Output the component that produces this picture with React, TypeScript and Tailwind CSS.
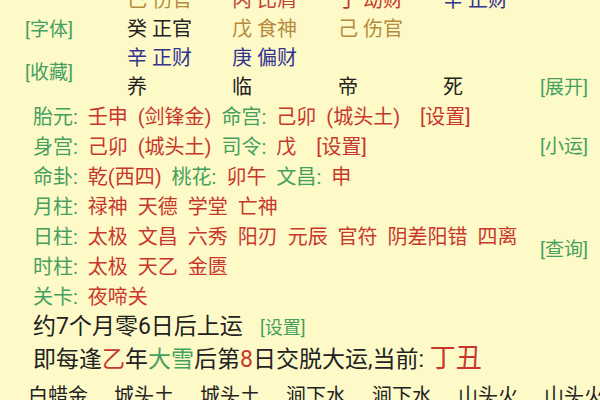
import React from 'react';

// 八字排盘 detail view (scrolled a little, so the top row is cut off)

type Cell = { gan: string; shen: string; color: string };

const GREEN = 'text-[#45a060]';
const RED = 'text-[#c8372d]';

const pillarRows: (Cell | null)[][] = [
  [
    { gan: '己', shen: '伤官', color: 'text-[#b58a3e]' },
    { gan: '丙', shen: '比肩', color: 'text-[#c0463a]' },
    { gan: '丁', shen: '劫财', color: 'text-[#c8372d]' },
    { gan: '辛', shen: '正财', color: 'text-[#34348f]' },
  ],
  [
    { gan: '癸', shen: '正官', color: 'text-[#222222]' },
    { gan: '戊', shen: '食神', color: 'text-[#b58a3e]' },
    { gan: '己', shen: '伤官', color: 'text-[#b58a3e]' },
    null,
  ],
  [
    { gan: '辛', shen: '正财', color: 'text-[#34348f]' },
    { gan: '庚', shen: '偏财', color: 'text-[#34348f]' },
    null,
    null,
  ],
];

const stages = ['养', '临', '帝', '死'];
const nayin = ['白蜡金', '城头土', '城头土', '涧下水', '涧下水', '山头火', '山头火'];

const Label: React.FC<{ children: React.ReactNode }> = ({ children }) => (
  <span className={GREEN}>{children}: </span>
);

export default function App() {
  return (
    <div className="w-[600px] h-[400px] overflow-hidden bg-[#fdfac8] font-['Roboto','Noto_Sans_CJK_SC',sans-serif] text-[#222222]">
      <div className="-mt-[14px]">
        <div className="flex">
          <div className="flex-1 min-w-0">
            {/* pillars */}
            <div className="flex">
              <div className={`w-[127px] pl-[25px] pt-[29px] text-[19px] ${GREEN}`}>
                <div className="h-[29px] leading-[29px]">[字体]</div>
                <div className="mt-[14px] h-[29px] leading-[29px]">[收藏]</div>
              </div>
              <div className="grid grid-cols-[105px_106px_105px_80px] text-[20px]">
                {pillarRows.map((row, r) =>
                  row.map((c, i) => (
                    <div key={`${r}-${i}`} className={`h-[29px] leading-[29px] whitespace-pre ${c ? c.color : ''}`}>
                      {c ? `${c.gan} ${c.shen}` : ''}
                    </div>
                  ))
                )}
                {stages.map((s) => (
                  <div key={s} className="h-[29px] leading-[29px]">{s}</div>
                ))}
              </div>
            </div>

            {/* shensha lines */}
            <div className={`pl-[33px] text-[20px] leading-[30px] whitespace-pre [word-spacing:5px] ${RED}`}>
              <div>
                <Label>胎元</Label>壬申 (剑锋金) <Label>命宫</Label>己卯 (城头土)  [设置]
              </div>
              <div>
                <Label>身宫</Label>己卯 (城头土) <Label>司令</Label>戊  [设置]
              </div>
              <div>
                <Label>命卦</Label>乾(西四) <Label>桃花</Label>卯午 <Label>文昌</Label>申
              </div>
              <div>
                <Label>月柱</Label>禄神 天德 学堂 亡神
              </div>
              <div>
                <Label>日柱</Label>太极 文昌 六秀 阳刃 元辰 官符 阴差阳错 四离
              </div>
              <div>
                <Label>时柱</Label>太极 天乙 金匮
              </div>
              <div>
                <Label>关卡</Label>夜啼关
              </div>
            </div>
          </div>

          {/* right actions */}
          <div className={`w-[60px] shrink-0 pt-[88px] text-[19px] ${GREEN}`}>
            <div className="h-[28px] leading-[28px]">[展开]</div>
            <div className="mt-[31px] h-[28px] leading-[28px]">[小运]</div>
            <div className="mt-[75px] h-[28px] leading-[28px]">[查询]</div>
          </div>
        </div>

        {/* dayun start */}
        <div className="pl-[33px] text-[23px] leading-[30px] whitespace-pre">
          <div>
            约7个月零6日后上运   <span className={`text-[18px] ${GREEN}`}>[设置]</span>
          </div>
          <div>
            即每逢<span className={RED}>乙</span>年<span className={GREEN}>大雪</span>后第<span className={RED}>8</span>日交脱大运,当前: <span className={`text-[26px] ${RED}`}>丁丑</span>
          </div>
        </div>

        {/* nayin row */}
        <div className="mt-[6px] pl-[28px] flex gap-[26px] text-[20px] leading-[30px] whitespace-nowrap">
          {nayin.map((n, i) => (
            <span key={i}>{n}</span>
          ))}
        </div>
      </div>
    </div>
  );
}
